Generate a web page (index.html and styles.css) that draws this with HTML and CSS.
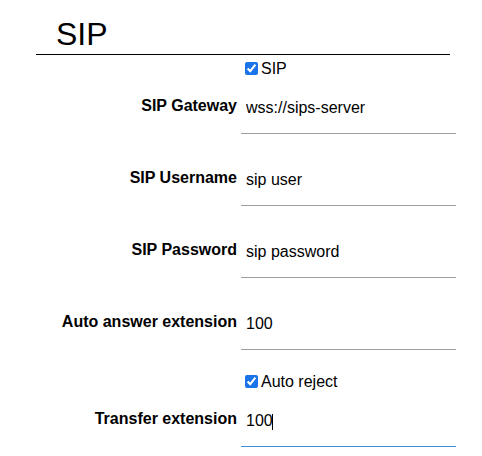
FILE: index.html
```html
<!DOCTYPE html>
<html>
<head>
<meta charset="utf-8">
<title>SIP</title>
<link rel="stylesheet" href="styles.css">
</head>
<body>
<h1 class="title">SIP</h1>
<form class="form">
  <div class="check-row first">
    <span></span>
    <label class="check"><input type="checkbox" checked>SIP</label>
  </div>
  <div class="field">
    <label class="field-label">SIP Gateway</label>
    <input class="field-input" type="text" value="wss://sips-server">
  </div>
  <div class="field">
    <label class="field-label">SIP Username</label>
    <input class="field-input" type="text" value="sip user">
  </div>
  <div class="field">
    <label class="field-label">SIP Password</label>
    <input class="field-input" type="text" value="sip password">
  </div>
  <div class="field before-check">
    <label class="field-label">Auto answer extension</label>
    <input class="field-input" type="text" value="100">
  </div>
  <div class="check-row">
    <span></span>
    <label class="check"><input type="checkbox" checked>Auto reject</label>
  </div>
  <div class="field">
    <label class="field-label">Transfer extension</label>
    <span class="input-wrap">
      <input class="field-input focused" type="text" value="100">
      <span class="caret"></span>
    </span>
  </div>
</form>
</body>
</html>
```

FILE: styles.css
```css
html, body {
  margin: 0;
  padding: 0;
  background: #fff;
}
body {
  font-family: "Liberation Sans", Arial, sans-serif;
  font-size: 16px;
  color: #000;
}
.title {
  margin: 16px 32px 0 36px;
  padding: 0 0 1px 20px;
  font-size: 32px;
  font-weight: normal;
  line-height: 37px;
  border-bottom: 1px solid #000;
}
.form {
  display: flex;
  flex-direction: column;
  margin: 0;
}
.check-row,
.field {
  display: grid;
  grid-template-columns: 237px 215px;
  column-gap: 4px;
  line-height: 18px;
}
.check-row {
  margin-bottom: 19px;
}
.check-row.first {
  margin-top: 5px;
}
.check input {
  width: 13px;
  height: 13px;
  margin: 0 3px 0 4px;
  vertical-align: -1px;
  accent-color: #1a73e8;
}
.field {
  margin-bottom: 35px;
  align-items: start;
}
.field.before-check {
  margin-bottom: 23px;
}
.field:last-child {
  margin-bottom: 0;
}
.field-label {
  font-weight: bold;
  text-align: right;
  white-space: nowrap;
}
.input-wrap {
  position: relative;
  display: block;
}
.field-input {
  display: block;
  box-sizing: border-box;
  width: 215px;
  height: 37px;
  margin: 0;
  padding: 2px 5px 16px;
  border: 0;
  border-bottom: 1px solid #9e9e9e;
  font-family: "Liberation Sans", Arial, sans-serif;
  font-size: 16px;
  line-height: 18px;
  color: #000;
  background: transparent;
  outline: none;
}
.field-input.focused {
  border-bottom-color: #3b8fde;
}
.caret {
  position: absolute;
  left: 31px;
  top: 4px;
  width: 1px;
  height: 16px;
  background: #000;
}
```
